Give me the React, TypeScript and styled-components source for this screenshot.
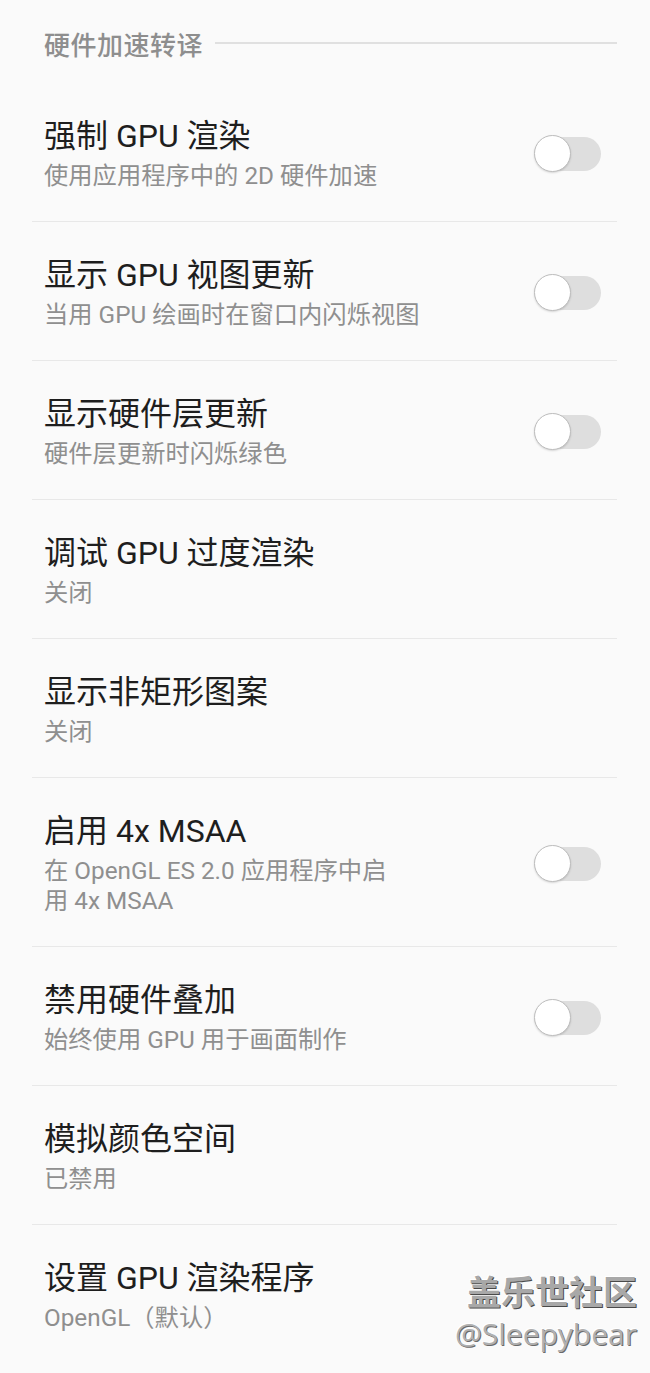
import * as React from 'react';
import styled, {createGlobalStyle} from "styled-components";

const GlobalStyle = createGlobalStyle`
  html, body {
    margin: 0;
    padding: 0;
    background: #fafafa;
    overflow: hidden;
  }
  body {
    font-family: Roboto, "Noto Sans CJK SC", "Noto Sans", sans-serif;
  }
`;

type Item = {
    title: string;
    summary: string;
    toggle?: boolean;
};

const items: Item[] = [
    {title: "强制 GPU 渲染", summary: "使用应用程序中的 2D 硬件加速", toggle: true},
    {title: "显示 GPU 视图更新", summary: "当用 GPU 绘画时在窗口内闪烁视图", toggle: true},
    {title: "显示硬件层更新", summary: "硬件层更新时闪烁绿色", toggle: true},
    {title: "调试 GPU 过度渲染", summary: "关闭"},
    {title: "显示非矩形图案", summary: "关闭"},
    {title: "启用 4x MSAA", summary: "在 OpenGL ES 2.0 应用程序中启\n用 4x MSAA", toggle: true},
    {title: "禁用硬件叠加", summary: "始终使用 GPU 用于画面制作", toggle: true},
    {title: "模拟颜色空间", summary: "已禁用"},
    {title: "设置 GPU 渲染程序", summary: "OpenGL（默认）"},
];

export default function App() {
    return (
        <Page>
            <GlobalStyle/>
            <Category>
                <CategoryTitle>硬件加速转译</CategoryTitle>
                <CategoryLine/>
            </Category>
            <List>
                {items.map((item, i) => (
                    <Row key={i} $last={i === items.length - 1}>
                        <Texts>
                            <Title>{item.title}</Title>
                            <Summary>{item.summary}</Summary>
                        </Texts>
                        {item.toggle && (
                            <Switch>
                                <Track/>
                                <Thumb/>
                            </Switch>
                        )}
                    </Row>
                ))}
            </List>
            <Watermark>
                <Brand>盖乐世社区</Brand>
                <Handle>@Sleepybear</Handle>
            </Watermark>
        </Page>
    );
}

const Page = styled.div`
  position: relative;
  width: 650px;
  height: 1373px;
  overflow: hidden;
  background: #fafafa;
`;

const Category = styled.div`
  display: flex;
  align-items: center;
  gap: 12px;
  height: 83px;
  padding: 3px 33px 0 44px;
  box-sizing: border-box;
`;

const CategoryTitle = styled.div`
  font-size: 26px;
  font-weight: 500;
  color: #8e8e8e;
  font-family: "Noto Sans CJK SC", sans-serif;
  letter-spacing: 0.5px;
`;

const CategoryLine = styled.div`
  flex: 1;
  height: 2px;
  background: #e0e0e0;
`;

const List = styled.div`
  margin: 0 33px 0 32px;
`;

const Row = styled.div<{ $last?: boolean }>`
  display: flex;
  align-items: center;
  justify-content: space-between;
  padding: 33px 16px 30px 12px;
  border-bottom: ${p => p.$last ? "none" : "1px solid #e8e8e8"};
`;

const Texts = styled.div`
  display: flex;
  flex-direction: column;
`;

const Title = styled.div`
  font-size: 32px;
  line-height: 40px;
  color: #1e1e1e;
`;

const Summary = styled.div`
  margin-top: 5px;
  font-size: 24.3px;
  line-height: 30px;
  color: #8f8f8f;
  white-space: pre-line;
`;

const Switch = styled.div`
  position: relative;
  width: 67px;
  height: 40px;
  flex-shrink: 0;
`;

const Track = styled.div`
  position: absolute;
  right: 0;
  top: 3px;
  width: 60px;
  height: 34px;
  border-radius: 17px;
  background: #dedede;
`;

const Thumb = styled.div`
  position: absolute;
  left: 0;
  top: 1px;
  width: 35px;
  height: 35px;
  border-radius: 50%;
  background: #fff;
  border: 1.5px solid #bdbdbd;
  box-shadow: 0 1px 2px rgba(0, 0, 0, 0.15);
`;

const Watermark = styled.div`
  position: absolute;
  right: 13px;
  top: 1268px;
  display: flex;
  flex-direction: column;
  align-items: flex-end;
  pointer-events: none;
`;

const Brand = styled.div`
  font-family: "Noto Sans CJK SC", sans-serif;
  font-size: 34px;
  font-weight: 700;
  line-height: 46px;
  color: #a8a8a8;
  text-shadow: 1px 1px 0 #4a4a4a, -1px -1px 0 #ffffff;
`;

const Handle = styled.div`
  font-family: "Open Sans", sans-serif;
  font-size: 30px;
  line-height: 40px;
  color: #b0b0b0;
  text-shadow: 1px 1px 0 #6a6a6a, -1px -1px 0 #ffffff;
`;
